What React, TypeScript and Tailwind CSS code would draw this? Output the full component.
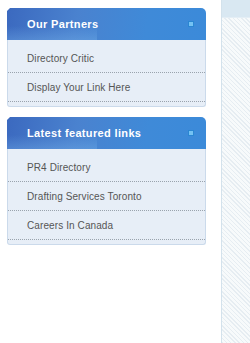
import React from "react";

interface LinkBoxProps {
  title: string;
  links: string[];
}

function LinkBox({ title, links }: LinkBoxProps) {
  return (
    <div className="w-[199px]">
      <div className="relative h-[32px] rounded-tr-[5px] bg-[linear-gradient(100deg,#3b69bf_0%,#4a82cf_35%,#3f8ad8_70%,#3b8ad9_100%)] flex items-center pl-[20px] pr-[12px]">
        <div className="absolute left-0 top-0 w-0 h-0 border-t-[3px] border-t-white border-r-[3px] border-r-transparent" />
        <div className="absolute left-0 bottom-0 w-[90px] h-[14px] bg-[linear-gradient(180deg,rgba(120,180,235,0)_0%,rgba(120,180,235,0.35)_100%)]" />
        <span className="relative flex-1 text-white font-bold text-[11px] tracking-[0.35px]">{title}</span>
        <span className="relative w-[6px] h-[6px] bg-[#74c2f3] border border-[#2a86d2]" />
      </div>
      <div className="bg-[#e7eef7] border-l border-r border-b border-[#cbdaeb] rounded-b-[3px] pt-[4px] pb-[4px]">
        {links.map((l) => (
          <div
            key={l}
            className="h-[29px] flex items-center pl-[19px] text-[10px] tracking-[0.1px] text-[#555] border-b border-dotted border-[#9aa3ad]"
          >
            {l}
          </div>
        ))}
      </div>
    </div>
  );
}

export default function App() {
  return (
    <div className="w-[250px] h-[343px] flex bg-white font-['Liberation_Sans',Arial,sans-serif] overflow-hidden">
      <div className="w-[221px] pl-[7px] pt-[8px] flex flex-col gap-[10px]">
        <LinkBox title="Our Partners" links={["Directory Critic", "Display Your Link Here"]} />
        <LinkBox
          title="Latest featured links"
          links={["PR4 Directory", "Drafting Services Toronto", "Careers In Canada"]}
        />
      </div>
      <div className="flex-1 border-l border-[#d3e2ec] flex flex-col">
        <div className="h-[18px] bg-[#d9e8f2] border-b border-[#e4eef5]" />
        <div className="flex-1 bg-[#f7fafb] bg-[repeating-linear-gradient(45deg,#e6edf2_0px,#e6edf2_1px,transparent_1px,transparent_3px)]" />
      </div>
    </div>
  );
}
